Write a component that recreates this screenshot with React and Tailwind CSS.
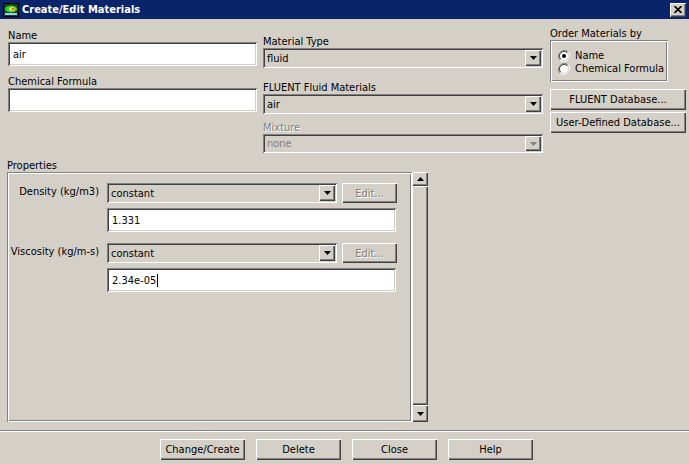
import React from 'react';

// classic 3D bevels
const sunken =
  'shadow-[inset_1px_1px_0_#808080,inset_-1px_-1px_0_#ffffff,inset_2px_2px_0_#404040,inset_-2px_-2px_0_#d4d0c8]';
const raised =
  'shadow-[inset_1px_1px_0_#ffffff,inset_-1px_-1px_0_#404040,inset_-2px_-2px_0_#808080]';
const etched =
  'shadow-[inset_1px_1px_0_#808080,inset_2px_2px_0_#ffffff,inset_-1px_-1px_0_#ffffff,inset_-2px_-2px_0_#808080]';
const greyed = 'text-[#808080] [text-shadow:1px_1px_0_#ffffff]';

function Arrow({ up = false, disabled = false }) {
  return (
    <svg width="7" height="4" viewBox="0 0 7 4">
      <polygon
        points={up ? '0,4 7,4 3.5,0' : '0,0 7,0 3.5,4'}
        fill={disabled ? '#808080' : '#000000'}
      />
    </svg>
  );
}

function TextBox({ value, caret, className }) {
  return (
    <div className={`flex items-center bg-white pl-[5px] ${sunken} ${className}`}>
      <span>{value}</span>
      {caret && <span className="ml-[1px] h-[13px] w-[1px] bg-black" />}
    </div>
  );
}

function Combo({ value, disabled, className }) {
  return (
    <div className={`flex items-stretch bg-[#d4d0c8] p-[2px] ${sunken} ${className}`}>
      <span className={`flex flex-1 items-center pl-[2px] ${disabled ? 'text-[#808080]' : ''}`}>
        {value}
      </span>
      <div className={`flex w-[16px] items-center justify-center ${raised}`}>
        <Arrow disabled={disabled} />
      </div>
    </div>
  );
}

function Btn({ children, disabled, className }) {
  return (
    <div
      className={`flex items-center justify-center bg-[#d4d0c8] ${raised} ${
        disabled ? greyed : ''
      } ${className}`}
    >
      {children}
    </div>
  );
}

function Radio({ checked, label }) {
  return (
    <div className="flex h-[13px] items-center">
      <svg width="12" height="12" viewBox="0 0 12 12">
        <path d="M10.2 1.8 A6 6 0 0 0 1.8 10.2" fill="none" stroke="#808080" strokeWidth="1" />
        <path d="M1.8 10.2 A6 6 0 0 0 10.2 1.8" fill="none" stroke="#ffffff" strokeWidth="1" />
        <circle cx="6" cy="6" r="4.5" fill="#ffffff" />
        <path d="M9.2 2.8 A4.5 4.5 0 0 0 2.8 9.2" fill="none" stroke="#404040" strokeWidth="1" />
        <path d="M2.8 9.2 A4.5 4.5 0 0 0 9.2 2.8" fill="none" stroke="#d4d0c8" strokeWidth="1" />
        {checked && <circle cx="6" cy="6" r="2" fill="#000000" />}
      </svg>
      <span className="ml-[5px]">{label}</span>
    </div>
  );
}

function PropertyRow({ label, value, caret, className = '' }) {
  return (
    <div className={className}>
      <div className="flex items-start">
        <div className="w-[92px] pt-[2px] pr-[1px] text-right">{label}</div>
        <Combo value="constant" className="ml-[7px] h-[20px] w-[230px]" />
        <Btn disabled className="ml-[5px] h-[20px] w-[55px]">
          Edit...
        </Btn>
      </div>
      <TextBox value={value} caret={caret} className="ml-[99px] mt-[5px] h-[24px] w-[289px]" />
    </div>
  );
}

export default function App() {
  return (
    <div className="flex h-[464px] w-[689px] flex-col overflow-hidden bg-[#d4d0c8] text-[11px] leading-[13px] text-black [font-family:'DejaVu_Sans_Condensed','Liberation_Sans',Arial,sans-serif]">
      {/* caption bar */}
      <div className="flex h-[19px] items-center bg-[#0a246a] pl-[3px] pr-[3px]">
        <svg width="16" height="14" viewBox="0 0 16 14">
          <rect x="0.5" y="0.5" width="15" height="13" fill="#1d3d1d" stroke="#000000" />
          <ellipse cx="8" cy="6" rx="6" ry="3.5" fill="#2fcf3a" />
          <ellipse cx="9" cy="6" rx="3" ry="2" fill="#f2e331" />
          <ellipse cx="10" cy="6" rx="1.2" ry="1" fill="#e0402a" />
          <rect x="2" y="10" width="12" height="2" fill="#8fd0ff" />
        </svg>
        <span className="ml-[3px] font-bold text-white">Create/Edit Materials</span>
        <div className={`ml-auto flex h-[14px] w-[16px] items-center justify-center bg-[#d4d0c8] ${raised}`}>
          <svg width="8" height="7" viewBox="0 0 8 7">
            <path d="M0.5 0 L7.5 7 M7.5 0 L0.5 7" stroke="#000000" strokeWidth="1.6" />
          </svg>
        </div>
      </div>

      {/* top fields */}
      <div className="flex items-start pl-[8px] pt-[8px]">
        <div className="w-[249px] pt-[2px]">
          <div>Name</div>
          <TextBox value="air" className="h-[24px]" />
          <div className="mt-[9px]">Chemical Formula</div>
          <TextBox value="" className="h-[24px]" />
        </div>

        <div className="ml-[6px] w-[280px] pt-[8px]">
          <div>Material Type</div>
          <Combo value="fluid" className="h-[20px]" />
          <div className="mt-[13px]">FLUENT Fluid Materials</div>
          <Combo value="air" className="h-[20px]" />
          <div className={`mt-[7px] ${greyed}`}>Mixture</div>
          <Combo value="none" disabled className="h-[19px]" />
        </div>

        <div className="ml-[7px] w-[137px]">
          <div>Order Materials by</div>
          <div className={`flex h-[42px] w-[118px] flex-col pl-[8px] pt-[9px] ${etched}`}>
            <Radio checked label="Name" />
            <Radio label="Chemical Formula" />
          </div>
          <Btn className="mt-[7px] h-[21px] w-[136px]">FLUENT Database...</Btn>
          <Btn className="mt-[2px] h-[21px] w-[136px]">User-Defined Database...</Btn>
        </div>
      </div>

      {/* properties */}
      <div className="mt-[6px] pl-[7px]">Properties</div>
      <div className="flex pl-[7px]">
        <div className={`h-[250px] w-[405px] pt-[11px] ${etched}`}>
          <PropertyRow label="Density (kg/m3)" value="1.331" className="pl-[1px]" />
          <PropertyRow label="Viscosity (kg/m-s)" value="2.34e-05" caret className="mt-[11px] pl-[1px]" />
        </div>
        <div className="flex h-[250px] w-[16px] flex-col">
          <div className={`flex h-[14px] items-center justify-center ${raised}`}>
            <Arrow up />
          </div>
          <div className={`flex-1 ${raised}`} />
          <div className={`flex h-[17px] items-center justify-center ${raised}`}>
            <Arrow />
          </div>
        </div>
      </div>

      {/* separator + action buttons */}
      <div className="mt-[8px] h-[2px] border-t border-b border-t-[#808080] border-b-white" />
      <div className="mt-[7px] flex justify-center gap-[11px] pl-[4px]">
        <Btn className="h-[21px] w-[85px]">Change/Create</Btn>
        <Btn className="h-[21px] w-[85px]">Delete</Btn>
        <Btn className="h-[21px] w-[85px]">Close</Btn>
        <Btn className="h-[21px] w-[85px]">Help</Btn>
      </div>
    </div>
  );
}
